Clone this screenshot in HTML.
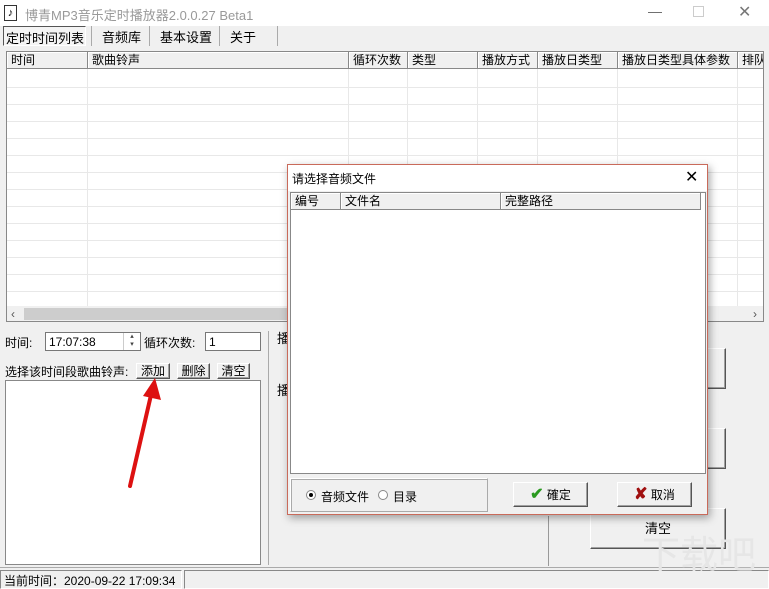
<!DOCTYPE html>
<html><head><meta charset="utf-8"><style>
*{box-sizing:border-box;margin:0;padding:0}
body{width:769px;height:589px;background:#f0f0f0;font-family:"Liberation Sans","Noto Sans CJK SC",sans-serif;font-size:12px;color:#000;position:relative;overflow:hidden}
.a{position:absolute}
.btn{position:absolute;background:#f0f0f0;border:1px solid;border-color:#fff #555 #555 #fff;box-shadow:inset -1px -1px 0 #a0a0a0;text-align:center}
.hd{position:absolute;top:0;height:17px;border-right:1px solid #888;border-bottom:1px solid #888;background:#f0f0f0;padding-left:4px;line-height:16px;box-shadow:inset 1px 1px 0 #fff}
</style></head><body>
<div class="a" style="left:0;top:0;width:769px;height:26px;background:#fff"></div>
<div class="a" style="left:4px;top:5px;width:13px;height:16px;border:1px solid #333;background:#fff;font-size:11px;line-height:14px;text-align:center">♪</div>
<div class="a" style="left:25px;top:5px;font-size:13px;color:#999">博青MP3音乐定时播放器2.0.0.27 Beta1</div>
<div class="a" style="left:648px;top:3px;color:#666;font-size:14px">—</div>
<div class="a" style="left:693px;top:6px;width:11px;height:11px;border:1px solid #ccc"></div>
<div class="a" style="left:738px;top:2px;color:#777;font-size:16px">✕</div>
<!-- tabs -->
<div class="a" style="left:3px;top:26px;width:83px;height:20px;border:1px solid;border-color:#555 #fff #fff #555;background:#f4f4f4;font-size:13px;padding:1px 2px;white-space:nowrap">定时时间列表</div>
<div class="a" style="left:102px;top:27px;font-size:13px">音频库</div>
<div class="a" style="left:160px;top:27px;font-size:13px">基本设置</div>
<div class="a" style="left:230px;top:27px;font-size:13px">关于</div>
<div class="a" style="left:91px;top:26px;width:1px;height:20px;background:#aaa"></div>
<div class="a" style="left:149px;top:26px;width:1px;height:20px;background:#aaa"></div>
<div class="a" style="left:219px;top:26px;width:1px;height:20px;background:#aaa"></div>
<div class="a" style="left:277px;top:26px;width:1px;height:20px;background:#aaa"></div>
<!-- table -->
<div class="a" style="left:6px;top:51px;width:758px;height:271px;border:1px solid #888;background:#fff;overflow:hidden">
 <div class="a" style="left:0;top:0;width:760px;height:254px;background:
 repeating-linear-gradient(to bottom,transparent 0,transparent 16px,#e8e8e8 16px,#e8e8e8 17px);background-position:0 19px"></div>
 <div class="a" style="left:80px;top:0;width:1px;height:254px;background:#e8e8e8"></div>
 <div class="a" style="left:341px;top:0;width:1px;height:254px;background:#e8e8e8"></div>
 <div class="a" style="left:400px;top:0;width:1px;height:254px;background:#e8e8e8"></div>
 <div class="a" style="left:470px;top:0;width:1px;height:254px;background:#e8e8e8"></div>
 <div class="a" style="left:530px;top:0;width:1px;height:254px;background:#e8e8e8"></div>
 <div class="a" style="left:610px;top:0;width:1px;height:254px;background:#e8e8e8"></div>
 <div class="a" style="left:730px;top:0;width:1px;height:254px;background:#e8e8e8"></div>
 <div class="hd" style="left:0;width:81px">时间</div>
 <div class="hd" style="left:81px;width:261px">歌曲铃声</div>
 <div class="hd" style="left:342px;width:59px">循环次数</div>
 <div class="hd" style="left:401px;width:70px">类型</div>
 <div class="hd" style="left:471px;width:60px">播放方式</div>
 <div class="hd" style="left:531px;width:80px">播放日类型</div>
 <div class="hd" style="left:611px;width:120px">播放日类型具体参数</div>
 <div class="hd" style="left:731px;width:40px">排队</div>
 <div class="a" style="left:0;top:254px;width:758px;height:16px;background:#f0f0f0"></div>
 <div class="a" style="left:17px;top:256px;width:640px;height:12px;background:#cdcdcd"></div>
 <div class="a" style="left:4px;top:255px;color:#555">‹</div>
 <div class="a" style="left:746px;top:255px;color:#555">›</div>
</div>
<!-- left controls -->
<div class="a" style="left:5px;top:334px;font-size:12px">时间:</div>
<div class="a" style="left:45px;top:332px;width:96px;height:19px;border:1px solid #777;background:#fff;padding:2px 3px">17:07:38</div>
<div class="a" style="left:123px;top:333px;width:17px;height:17px;border-left:1px solid #ccc;font-size:7px;text-align:center;line-height:8px;color:#444">▴<br>▾</div>
<div class="a" style="left:144px;top:334px;font-size:12px">循环次数:</div>
<div class="a" style="left:205px;top:332px;width:56px;height:19px;border:1px solid #777;background:#fff;padding:2px 3px">1</div>
<div class="a" style="left:5px;top:363px;font-size:12px">选择该时间段歌曲铃声:</div>
<div class="btn" style="left:136px;top:363px;width:34px;height:16px;line-height:14px;font-size:12px">添加</div>
<div class="btn" style="left:177px;top:363px;width:33px;height:16px;line-height:14px;font-size:12px">删除</div>
<div class="btn" style="left:217px;top:363px;width:33px;height:16px;line-height:14px;font-size:12px">清空</div>
<div class="a" style="left:5px;top:380px;width:256px;height:185px;border:1px solid #888;background:#fff"></div>
<div class="a" style="left:268px;top:331px;width:1px;height:234px;background:#aaa"></div>
<div class="a" style="left:277px;top:328px;font-size:13px">播</div>
<div class="a" style="left:277px;top:380px;font-size:13px">播</div>
<div class="a" style="left:548px;top:516px;width:1px;height:50px;background:#999"></div>
<div class="btn" style="left:590px;top:348px;width:136px;height:41px"></div>
<div class="btn" style="left:590px;top:428px;width:136px;height:41px"></div>
<div class="btn" style="left:590px;top:508px;width:136px;height:41px;line-height:40px;font-size:13px">清空</div>
<div class="a" style="left:0;top:567px;width:769px;height:1px;background:#aaa"></div>
<div class="a" style="left:0;top:570px;width:182px;height:19px;border:1px solid;border-color:#888 #fff #fff #888;padding:1px 3px;font-size:12px">当前时间：2020-09-22 17:09:34</div>
<div class="a" style="left:184px;top:570px;width:585px;height:19px;border:1px solid;border-color:#888 #fff #fff #888"></div>
<div class="a" style="left:642px;top:524px;font-size:38px;color:#e6e6e6;">下载吧</div>
<!-- arrow -->
<svg class="a" style="left:0;top:0" width="769" height="589"><line x1="130" y1="486" x2="151" y2="395" stroke="#d11" stroke-width="4" stroke-linecap="round"/><polygon points="155,378 161,400 143,396" fill="#d11"/></svg>
<!-- dialog -->
<div class="a" style="left:287px;top:164px;width:421px;height:351px;border:1px solid #c96a5a;background:#f0f0f0;box-shadow:2px 3px 8px rgba(0,0,0,.35)">
 <div class="a" style="left:0;top:0;width:419px;height:26px;background:#fff"></div>
 <div class="a" style="left:4px;top:5px;font-size:12px">请选择音频文件</div>
 <div class="a" style="left:397px;top:2px;font-size:16px">✕</div>
 <div class="a" style="left:2px;top:27px;width:416px;height:282px;border:1px solid #888;background:#fff;overflow:hidden">
  <div class="hd" style="left:0;width:50px">编号</div>
  <div class="hd" style="left:50px;width:160px">文件名</div>
  <div class="hd" style="left:210px;width:200px">完整路径</div>
 </div>
 <div class="a" style="left:2px;top:313px;width:198px;height:34px;border:1px solid;border-color:#fff #aaa #aaa #fff;box-shadow:inset 1px 1px 0 #aaa"></div>
 <div class="a" style="left:18px;top:325px;width:10px;height:10px;border-radius:50%;border:1px solid #888;background:#fff"><div style="margin:2px;width:4px;height:4px;border-radius:50%;background:#000"></div></div>
 <div class="a" style="left:33px;top:323px;font-size:12px">音频文件</div>
 <div class="a" style="left:90px;top:325px;width:10px;height:10px;border-radius:50%;border:1px solid #888;background:#fff"></div>
 <div class="a" style="left:105px;top:323px;font-size:12px">目录</div>
 <div class="btn" style="left:225px;top:317px;width:75px;height:25px;line-height:23px;font-size:12px"><span style="color:#2a9a20;font-weight:bold;font-size:16px">✔</span> 確定</div>
 <div class="btn" style="left:329px;top:317px;width:75px;height:25px;line-height:23px;font-size:12px"><span style="color:#a01010;font-weight:bold;font-size:16px">✘</span> 取消</div>
</div>
</body></html>
